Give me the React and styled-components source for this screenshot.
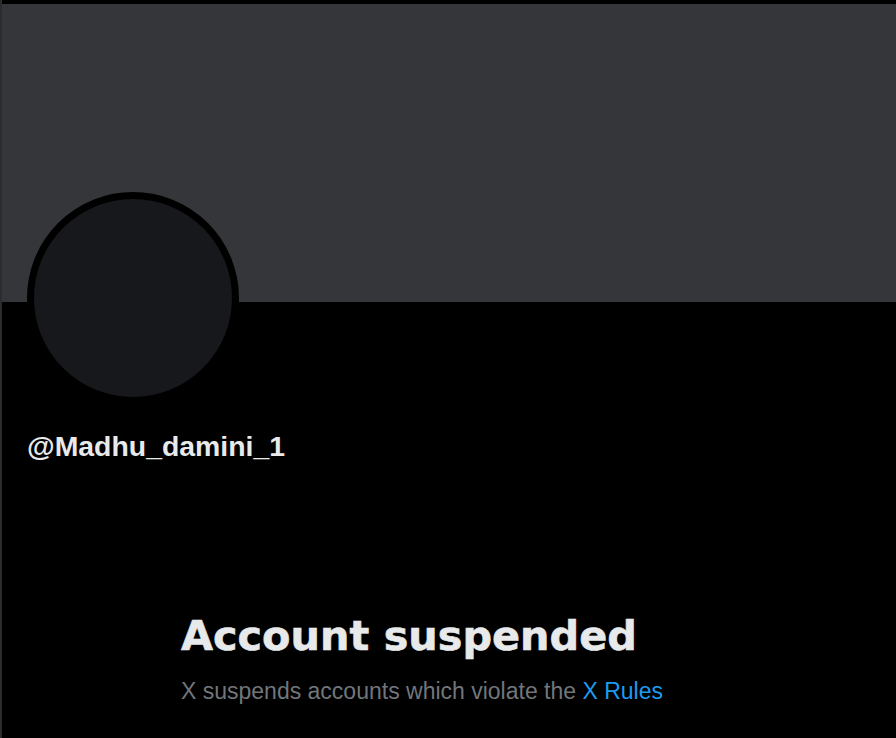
import React from 'react';
import styled, { createGlobalStyle } from 'styled-components';

const GlobalStyle = createGlobalStyle`
    html, body {
        margin: 0;
        padding: 0;
        background: #000000;
    }
    body {
        font-family: "Liberation Sans", Arial, sans-serif;
        color: #e7e9ea;
    }
`

const Page = styled.main`
    min-height: 738px;
    box-sizing: border-box;
    border-left: 2px solid #2a2d30;
    padding-top: 4px;
    display: flex;
    flex-direction: column;
`

const Banner = styled.div`
    height: 298px;
    background: #35363a;
`

const ProfileHead = styled.div`
    display: flex;
    flex-direction: column;
    padding-left: 25px;
`

const Avatar = styled.div`
    width: 198px;
    height: 198px;
    margin-top: -110px;
    border: 7px solid #000000;
    border-radius: 50%;
    background: #17181b;
`

const Handle = styled.h2`
    margin: 24px 0 0;
    font-size: 28.4px;
    line-height: 36px;
    font-weight: 700;
    color: #e7e9ea;
`

const Notice = styled.section`
    display: flex;
    flex-direction: column;
    padding: 148px 0 0 179px;
`

const Title = styled.h1`
    margin: 0;
    font-family: "DejaVu Sans", "Liberation Sans", sans-serif;
    font-size: 41.4px;
    line-height: 48px;
    font-weight: 700;
    color: #e7e9ea;
    -webkit-text-stroke: 0.6px #e7e9ea;
`

const Subtitle = styled.p`
    margin: 16px 0 0;
    font-size: 23px;
    line-height: 30px;
    color: #71767b;

    & a {
        color: #1d9bf0;
        text-decoration: none;
    }
`

export default function App() {
    return (
        <>
            <GlobalStyle />
            <Page>
                <Banner />
                <ProfileHead>
                    <Avatar />
                    <Handle>@Madhu_damini_1</Handle>
                </ProfileHead>
                <Notice>
                    <Title>Account suspended</Title>
                    <Subtitle>
                        X suspends accounts which violate the <a href="#">X Rules</a>
                    </Subtitle>
                </Notice>
            </Page>
        </>
    )
}
